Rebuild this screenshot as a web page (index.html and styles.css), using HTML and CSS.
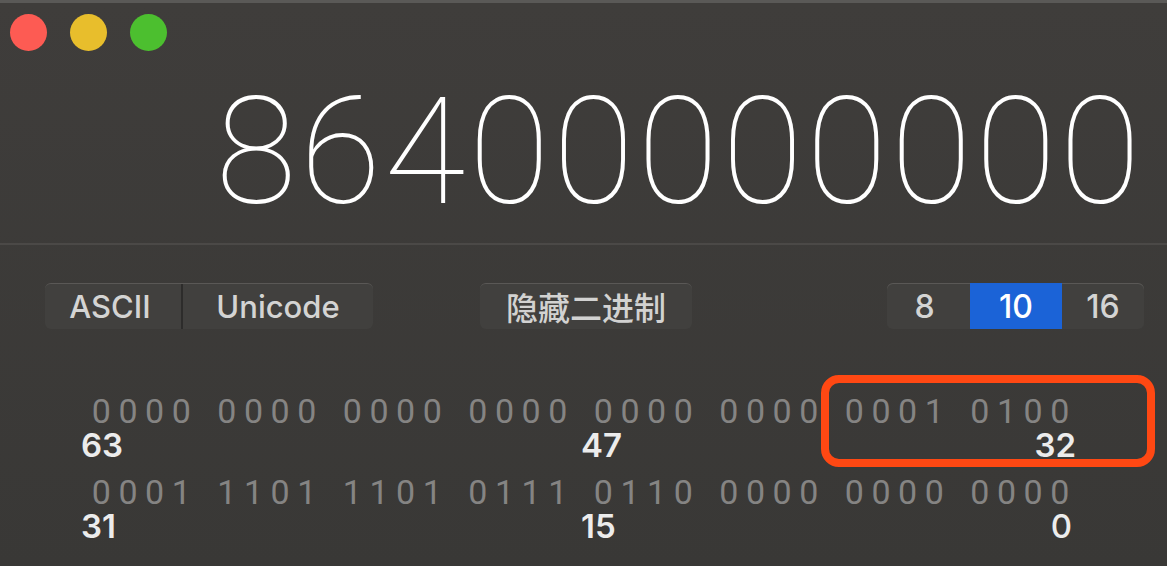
FILE: index.html
```html
<!DOCTYPE html>
<html lang="zh">
<head>
<meta charset="utf-8">
<title>计算器</title>
<link rel="stylesheet" href="styles.css">
</head>
<body>
<div class="window">
  <div class="titlebar">
    <span class="light red"></span>
    <span class="light yellow"></span>
    <span class="light green"></span>
  </div>
  <div class="display">86400000000</div>
  <div class="separator"></div>
  <div class="controls">
    <div class="seg seg-text">
      <span class="seg-item ascii">ASCII</span>
      <span class="seg-item unicode">Unicode</span>
    </div>
    <div class="btn-cjk">隐藏二进制</div>
    <div class="seg seg-radix">
      <span class="seg-item r8">8</span>
      <span class="seg-item r10 active">10</span>
      <span class="seg-item r16">16</span>
    </div>
  </div>
  <div class="binary">
    <div class="bits">
      <span class="grp"><i>0</i><i>0</i><i>0</i><i>0</i></span>
      <span class="grp"><i>0</i><i>0</i><i>0</i><i>0</i></span>
      <span class="grp"><i>0</i><i>0</i><i>0</i><i>0</i></span>
      <span class="grp"><i>0</i><i>0</i><i>0</i><i>0</i></span>
      <span class="grp"><i>0</i><i>0</i><i>0</i><i>0</i></span>
      <span class="grp"><i>0</i><i>0</i><i>0</i><i>0</i></span>
      <span class="grp"><i>0</i><i>0</i><i>0</i><i>1</i></span>
      <span class="grp"><i>0</i><i>1</i><i>0</i><i>0</i></span>
    </div>
    <div class="labels">
      <span class="lbl c1">63</span>
      <span class="lbl c5">47</span>
      <span class="lbl c8">32</span>
    </div>
    <div class="bits row2">
      <span class="grp"><i>0</i><i>0</i><i>0</i><i>1</i></span>
      <span class="grp"><i>1</i><i>1</i><i>0</i><i>1</i></span>
      <span class="grp"><i>1</i><i>1</i><i>0</i><i>1</i></span>
      <span class="grp"><i>0</i><i>1</i><i>1</i><i>1</i></span>
      <span class="grp"><i>0</i><i>1</i><i>1</i><i>0</i></span>
      <span class="grp"><i>0</i><i>0</i><i>0</i><i>0</i></span>
      <span class="grp"><i>0</i><i>0</i><i>0</i><i>0</i></span>
      <span class="grp"><i>0</i><i>0</i><i>0</i><i>0</i></span>
    </div>
    <div class="labels">
      <span class="lbl c1">31</span>
      <span class="lbl c5">15</span>
      <span class="lbl c8 zero">0</span>
    </div>
  </div>
  <div class="highlight-box"></div>
</div>
</body>
</html>
```

FILE: styles.css
```css
* { box-sizing: border-box; }
html, body {
  margin: 0;
  padding: 0;
  width: 1167px;
  height: 566px;
  overflow: hidden;
  background: #3a3937;
}
.window {
  position: relative;
  width: 1167px;
  height: 566px;
  border-top: 3px solid #5a5957;
  background: linear-gradient(#3f3d3b, #393836);
  font-family: "Inter", "Liberation Sans", sans-serif;
}
.titlebar {
  display: flex;
  gap: 23px;
  padding: 11px 0 0 10px;
  height: 75px;
}
.light {
  width: 37px;
  height: 37px;
  border-radius: 50%;
}
.red { background: #fd5b53; }
.yellow { background: #e8be2c; }
.green { background: #4cbf2f; }

.display {
  height: 150px;
  line-height: 150px;
  font-family: "Roboto", "Liberation Sans", sans-serif;
  font-weight: 100;
  font-size: 148px;
  letter-spacing: 3.4px;
  color: #ffffff;
  text-align: right;
  padding-right: 23px;
  white-space: nowrap;
}
.separator {
  margin-top: 15px;
  height: 2px;
  background: #4b4947;
}
.controls {
  display: flex;
  align-items: flex-start;
  margin-top: 38px;
  padding-left: 45px;
  height: 46px;
}
.seg, .btn-cjk {
  display: flex;
  height: 46px;
  background: #41403e;
  border-top: 1px solid #5a5856;
  border-radius: 6px;
  overflow: hidden;
}
.seg-item {
  display: flex;
  align-items: center;
  justify-content: center;
  height: 100%;
  color: #d4d4d3;
  font-size: 31px;
  font-weight: 500;
}
.seg-text .ascii {
  width: 138px;
  border-right: 2px solid #2d2c2b;
  padding-right: 6px;
}
.seg-text .unicode {
  width: 190px;
}
.btn-cjk {
  margin-left: 107px;
  width: 212px;
  align-items: center;
  justify-content: center;
  font-family: "Noto Sans CJK SC", sans-serif;
  font-size: 32px;
  font-weight: 500;
  color: #d2d2d1;
  padding-bottom: 2px;
}
.seg-radix {
  margin-left: 195px;
  border-top: none;
  box-shadow: inset 0 1px 0 #5a5856;
}
.seg-radix .seg-item { font-size: 32px; }
.seg-radix .r8 { width: 83px; padding-right: 8px; }
.seg-radix .r10 { width: 92px; }
.seg-radix .r16 { width: 82px; }
.seg-radix .active {
  background: #1b63d7;
  color: #ffffff;
}

.binary {
  margin-top: 67px;
  padding-left: 88px;
}
.bits, .labels {
  display: grid;
  grid-template-columns: repeat(8, 106.67px);
  column-gap: 18.85px;
}
.bits {
  height: 30px;
  line-height: 30px;
  font-family: "Roboto", "Liberation Sans", sans-serif;
  font-weight: 400;
  font-size: 34px;
  color: #858483;
}
.grp { display: flex; }
.grp i {
  font-style: normal;
  width: 26.67px;
  text-align: center;
}
.labels {
  margin-top: 6px;
  height: 26px;
  line-height: 26px;
  font-size: 33px;
  font-weight: 600;
  color: #ececec;
}
.row2 { margin-top: 19px; }
.lbl.c1 { grid-column: 1; justify-self: start; margin-left: -7px; }
.lbl.c5 { grid-column: 5; justify-self: start; margin-left: -9px; }
.lbl.c8 { grid-column: 8; justify-self: end; margin-right: -3px; }
.lbl.zero { margin-right: 1px; font-weight: 500; }

.highlight-box {
  position: absolute;
  left: 821px;
  top: 372px;
  width: 334px;
  height: 92px;
  border: 8px solid #ff4813;
  border-radius: 18px;
}
```
